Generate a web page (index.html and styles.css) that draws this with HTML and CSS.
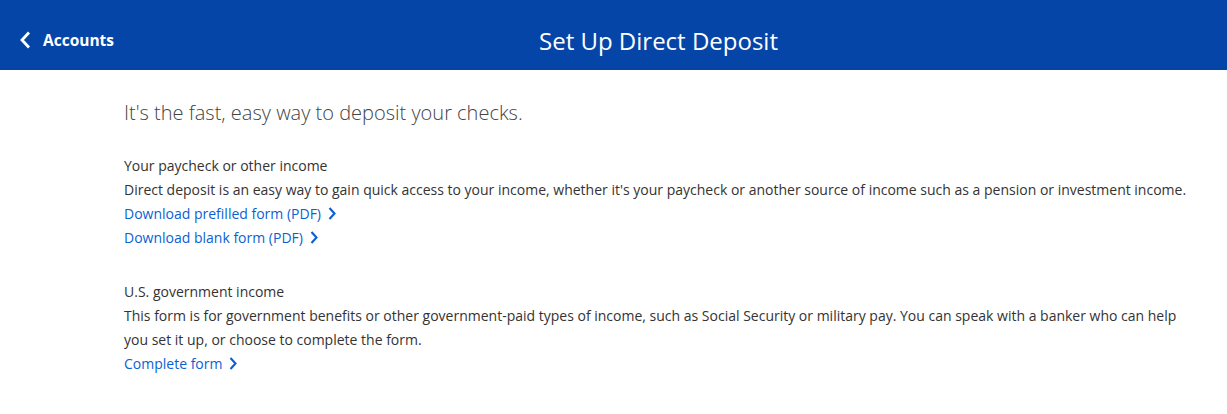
FILE: index.html
```html
<!DOCTYPE html>
<html lang="en">

<head>
    <meta charset="UTF-8">
    <meta name="viewport" content="width=device-width, initial-scale=1.0">
    <title>Set Up Direct Deposit</title>
    <link rel="stylesheet" href="styles.css">
</head>

<body>

    <header class="topbar">
        <a class="back" href="#">
            <svg class="back-icon" width="12" height="18" viewBox="0 0 12 18">
                <path d="M10 1.5 L3 9 L10 16.5" fill="none" stroke="#fff" stroke-width="2.8" />
            </svg>
            Accounts
        </a>
        <h1 class="title">Set Up Direct Deposit</h1>
    </header>

    <main class="content">
        <h2 class="lead">It's the fast, easy way to deposit your checks.</h2>

        <section class="block">
            <p>Your paycheck or other income</p>
            <p>Direct deposit is an easy way to gain quick access to your income, whether it's your paycheck or another source of income such as a pension or investment income.</p>
            <a class="link" href="#">Download prefilled form (PDF)
                <svg class="chev" width="8" height="13" viewBox="0 0 8 13">
                    <path d="M1.5 1 L6.5 6.5 L1.5 12" fill="none" stroke="#0b5fd3" stroke-width="2.1" />
                </svg></a>
            <a class="link" href="#">Download blank form (PDF)
                <svg class="chev" width="8" height="13" viewBox="0 0 8 13">
                    <path d="M1.5 1 L6.5 6.5 L1.5 12" fill="none" stroke="#0b5fd3" stroke-width="2.1" />
                </svg></a>
        </section>

        <section class="block">
            <p>U.S. government income</p>
            <p>This form is for government benefits or other government-paid types of income, such as Social Security or military pay. You can speak with a banker who can help you set it up, or choose to complete the form.</p>
            <a class="link" href="#">Complete form
                <svg class="chev" width="8" height="13" viewBox="0 0 8 13">
                    <path d="M1.5 1 L6.5 6.5 L1.5 12" fill="none" stroke="#0b5fd3" stroke-width="2.1" />
                </svg></a>
        </section>
    </main>

</body>

</html>
```

FILE: styles.css
```css
body {
    margin: 0;
    font-family: "Open Sans", "Liberation Sans", sans-serif;
    color: #333;
    background: #fff;
}

.topbar {
    height: 70px;
    background-color: #0645a8;
    display: flex;
    align-items: center;
    justify-content: center;
    position: relative;
}

.back {
    position: absolute;
    left: 19px;
    top: 0;
    height: 70px;
    display: flex;
    align-items: center;
    gap: 12px;
    color: #fff;
    font-size: 15.5px;
    font-weight: 700;
    text-decoration: none;
    padding-top: 10px;
    box-sizing: border-box;
}

.back-icon {
    display: block;
}

.title {
    margin: 0;
    color: #fff;
    font-size: 24px;
    font-weight: 400;
    padding-top: 10px;
    padding-left: 90px;
}

.content {
    padding: 29px 0 0 124px;
    width: 1066px;
}

.lead {
    margin: 0 0 27px;
    font-size: 20px;
    font-weight: 300;
    line-height: 28px;
    color: #444;
}

.block {
    margin-bottom: 30px;
    font-size: 14px;
    line-height: 24px;
}

.block p {
    margin: 0;
}

.link {
    display: block;
    color: #0b5fd3;
    text-decoration: none;
}

.chev {
    vertical-align: -1px;
    margin-left: 3px;
}
```
